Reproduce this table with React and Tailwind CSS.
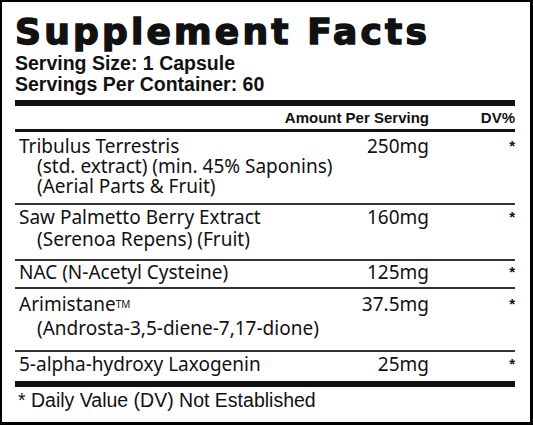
import React from "react";

const rows = [
  {
    lines: ["Tribulus Terrestris", "(std. extract) (min. 45% Saponins)", "(Aerial Parts & Fruit)"],
    amount: "250mg",
    cls: "leading-[20px] pt-[4px] pb-[7px]",
  },
  {
    lines: ["Saw Palmetto Berry Extract", "(Serenoa Repens) (Fruit)"],
    amount: "160mg",
    cls: "leading-[22px] pt-[1px] pb-[9px]",
  },
  {
    lines: ["NAC (N-Acetyl Cysteine)"],
    amount: "125mg",
    cls: "leading-[22px] pt-0 pb-[4px]",
  },
  {
    lines: ["Arimistane", "(Androsta-3,5-diene-7,17-dione)"],
    amount: "37.5mg",
    tm: true,
    cls: "leading-[24px] pt-[3px] pb-[10px]",
  },
  {
    lines: ["5-alpha-hydroxy Laxogenin"],
    amount: "25mg",
    cls: "leading-[22px] pt-[1px] pb-[6px]",
  },
];

export default function App() {
  return (
    <div className="w-[533px] h-[425px] bg-white border-t-2 border-l-2 border-r-[3px] border-b-[3px] border-black pl-[13px] pr-[15px] text-[#111] overflow-hidden">
      <div className="font-['DejaVu_Sans',sans-serif] font-bold text-[36px] leading-[36px] pt-[12px] tracking-[3.2px] whitespace-nowrap [-webkit-text-stroke:1.5px_#111]">
        Supplement Facts
      </div>
      <div className="mt-[3px] font-['Liberation_Sans',Arial,sans-serif] font-bold text-[19.5px] leading-[21px]">
        <div>Serving Size: 1 Capsule</div>
        <div>Servings Per Container: 60</div>
      </div>
      <div className="mt-[5px] h-[6px] bg-[#111]" />
      <div className="flex font-['Liberation_Sans',Arial,sans-serif] font-bold text-[15px] leading-[16px] pt-[4px] pb-[3px]">
        <div className="flex-1" />
        <div className="text-right">Amount Per Serving</div>
        <div className="w-[86px] text-right">DV%</div>
      </div>
      <div className="h-[3px] bg-[#111]" />
      {rows.map((r, i) => (
        <div key={i}>
          <div className={"flex font-['Noto_Sans',sans-serif] text-[19px] " + r.cls}>
            <div className="flex-1 pl-[4px] whitespace-nowrap">
              {r.lines.map((l, j) => (
                <div key={j} className={j > 0 ? "pl-[18px]" : ""}>
                  {l}
                  {r.tm && j === 0 ? (
                    <sup className="text-[10px] relative top-[-3px]">TM</sup>
                  ) : null}
                </div>
              ))}
            </div>
            <div className="text-right whitespace-nowrap">{r.amount}</div>
            <div className="w-[86px] text-right font-['Liberation_Sans',Arial,sans-serif] font-bold text-[15px]">*</div>
          </div>
          {i < rows.length - 1 ? <div className="h-[2px] bg-[#333]" /> : null}
        </div>
      ))}
      <div className="h-[6px] bg-[#111]" />
      <div className="font-['Liberation_Sans',Arial,sans-serif] text-[19.5px] leading-[22px] pt-[2px] pl-[3px] whitespace-nowrap">
        * Daily Value (DV) Not Established
      </div>
    </div>
  );
}
